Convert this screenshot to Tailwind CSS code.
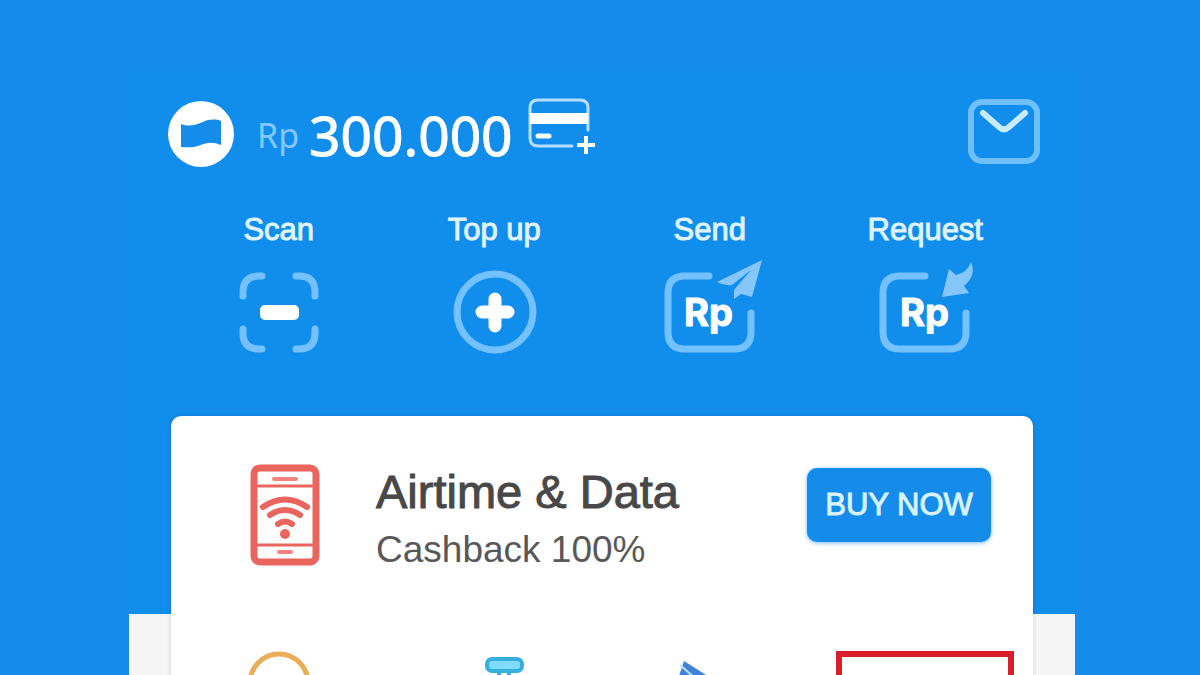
<!DOCTYPE html>
<html lang="en">
<head>
    <meta charset="UTF-8">
    <meta name="viewport" content="width=device-width, initial-scale=1.0">
    <title>Wallet</title>
    <script src="https://cdn.jsdelivr.net/npm/@tailwindcss/browser@4"></script>
</head>
<body class="bg-[#158bea] h-screen overflow-hidden pl-1 pt-[70px] font-['Liberation_Sans',Arial,sans-serif]">
    <div class="max-w-[946px] mx-auto bg-[#f5f5f5]">
        <!-- Balance and actions -->
        <header class="bg-[#118dec] px-[42px] pt-[30px] pb-[258px] text-white">
            <div class="flex items-center h-[68px] -ml-1">
                <svg class="size-[68px] shrink-0" viewBox="0 0 68 68">
                    <circle cx="34" cy="34" r="33" fill="#fff"/>
                    <path d="M14 24 C22 27 29 25 36 22 C42 19 49 19 54 21 V45 C45 41 38 43 31 46 C25 48 19 47 14 47 Z" fill="#158bea"/>
                </svg>
                <p class="flex items-center gap-2.5 ml-[22px] font-['Noto_Sans',sans-serif] leading-none">
                    <span class="pt-0.5 text-[34px] text-[#84c8ff]">Rp</span>
                    <span class="text-[55px] [-webkit-text-stroke:1px]">300.000</span>
                </p>
                <button class="ml-3 mb-2 shrink-0" aria-label="Add card">
                    <svg class="w-[70px] h-[68px]" viewBox="0 0 70 68" fill="none">
                        <path d="M63 34 V12 Q63 4 55 4 H13 Q5 4 5 12 V42 Q5 50 13 50 H47" stroke="#b5e0ff" stroke-width="3" stroke-linecap="round"/>
                        <path d="M5 17 H63 V28 H5 Z" fill="#fff"/>
                        <path d="M13 40 H24" stroke="#fff" stroke-width="5" stroke-linecap="round"/>
                        <path d="M52 49 H70 M61 40 V58" stroke="#fff" stroke-width="4"/>
                    </svg>
                </button>
                <button class="ml-auto -mr-2 shrink-0" aria-label="Messages">
                    <svg class="w-[74px] h-[72px]" viewBox="0 0 74 72" fill="none" stroke-linecap="round" stroke-linejoin="round">
                        <rect x="4" y="4" width="66" height="59" rx="11" stroke="#6fbffb" stroke-width="6"/>
                        <path d="M16 15 L32 29 Q37 34 42 29 L58 15" stroke="#c8ebff" stroke-width="6"/>
                    </svg>
                </button>
            </div>

            <nav class="grid grid-cols-4 mt-11 text-[31px] leading-9 text-[#dff3ff] [-webkit-text-stroke:1px]">
                <a href="#scan" class="flex flex-col items-center gap-2">
                    <span>Scan</span>
                    <svg class="w-[104px] h-[100px] overflow-visible" viewBox="0 0 104 100" fill="none" stroke="#74c1ff" stroke-width="7" stroke-linecap="round">
                        <path d="M16 40 V36 Q16 20 32 20 H35 M69 20 H72 Q88 20 88 36 V40 M16 73 V77 Q16 93 32 93 H35 M69 93 H72 Q88 93 88 77 V73"/>
                        <rect x="33" y="49" width="39" height="15" rx="5" fill="#fff" stroke="none"/>
                    </svg>
                </a>
                <a href="#topup" class="flex flex-col items-center gap-2">
                    <span>Top up</span>
                    <svg class="w-[104px] h-[100px] overflow-visible" viewBox="0 0 104 100" fill="none">
                        <circle cx="53" cy="56" r="38" stroke="#74c1ff" stroke-width="7"/>
                        <path d="M40 56 H66 M53 43 V70" stroke="#fff" stroke-width="13" stroke-linecap="round"/>
                    </svg>
                </a>
                <a href="#send" class="flex flex-col items-center gap-2">
                    <span>Send</span>
                    <svg class="w-[104px] h-[100px] overflow-visible" viewBox="0 0 104 100">
                        <path d="M51 20 H27 Q10 20 10 37 V76 Q10 93 27 93 H76 Q93 93 93 76 V57" fill="none" stroke="#74c1ff" stroke-width="7" stroke-linecap="round"/>
                        <path d="M104 4 L59 26 Q66 30 74 29 L93 14 L76 34 V43 L83 38 L94 41 Z" fill="#85c6fb"/>
                        <text x="26" y="70" fill="#fff" stroke="#fff" font-family="Inter" font-weight="700" font-size="38">Rp</text>
                    </svg>
                </a>
                <a href="#request" class="flex flex-col items-center gap-2">
                    <span>Request</span>
                    <svg class="w-[104px] h-[100px] overflow-visible" viewBox="0 0 104 100">
                        <path d="M52 20 H27 Q10 20 10 37 V76 Q10 93 27 93 H76 Q93 93 93 76 V57" fill="none" stroke="#74c1ff" stroke-width="7" stroke-linecap="round"/>
                        <path d="M98 6 Q104 19 91 30 L96 37 L69 41 L76 13 L83 19 Q94 17 98 6 Z" fill="#85c6fb"/>
                        <text x="27" y="70" fill="#fff" stroke="#fff" font-family="Inter" font-weight="700" font-size="38">Rp</text>
                    </svg>
                </a>
            </nav>
        </header>

        <!-- Promo card -->
        <main class="mx-[42px] -mt-[198px] bg-white rounded-t-[10px] shadow-[0_0_4px_rgba(0,0,0,0.15)]">
            <section class="flex items-start pt-12 pl-[79px] pr-[42px]">
                <svg class="w-[70px] h-[102px] shrink-0" viewBox="0 0 70 102" fill="none" stroke="#eb655f" stroke-linecap="round">
                    <rect x="4" y="4" width="62" height="94" rx="6" stroke-width="7"/>
                    <path d="M8 22 H62 M8 81 H62" stroke-width="3"/>
                    <path d="M24 15 H46 M29 88 H41" stroke="#f0837e" stroke-width="4"/>
                    <path d="M13 43 Q35 28 57 43" stroke-width="6"/>
                    <path d="M20 51 Q35 41 50 51" stroke-width="6"/>
                    <path d="M28 60 Q35 55 42 60" stroke-width="6"/>
                    <circle cx="35" cy="70" r="5" fill="#eb655f" stroke="none"/>
                </svg>
                <div class="ml-14">
                    <h1 class="text-[47px] leading-[56px] text-[#484848] [-webkit-text-stroke:1px]">Airtime &amp; Data</h1>
                    <p class="text-[37px] leading-[60px] text-[#585858]">Cashback 100%</p>
                </div>
                <button class="ml-auto mt-1 w-[184px] h-[74px] shrink-0 rounded-[10px] bg-[#158bea] text-[31px] text-[#d8f3ff] shadow-[0_1px_4px_rgba(21,139,234,0.6)] [-webkit-text-stroke:1px]">BUY NOW</button>
            </section>

            <nav class="grid grid-cols-4 justify-items-center mt-16">
                <a href="#bulb" aria-label="Electricity">
                    <svg class="size-20" viewBox="0 0 80 80" fill="none" stroke="#eaae58" stroke-width="5">
                        <circle cx="40" cy="39" r="29"/>
                    </svg>
                </a>
                <a href="#water" aria-label="Water">
                    <svg class="size-20" viewBox="0 0 80 80" fill="#7fdcff" stroke="#36afdf" stroke-width="4">
                        <path d="M45 24 V60 M55 24 V60"/>
                        <rect x="33" y="15" width="35" height="12" rx="5"/>
                    </svg>
                </a>
                <a href="#cards" aria-label="Cards">
                    <svg class="size-20" viewBox="0 0 80 80">
                        <path d="M14 17 L66 50 L46 78 L7 38 Z" fill="#3f82dc"/>
                        <path d="M10 21 L50 56" stroke="#b9e4ff" stroke-width="2"/>
                    </svg>
                </a>
                <a href="#more" aria-label="More" class="mt-[7px] w-[178px] h-[150px] border-[6px] border-[#d8202c]"></a>
            </nav>
        </main>
    </div>
</body>
</html>
